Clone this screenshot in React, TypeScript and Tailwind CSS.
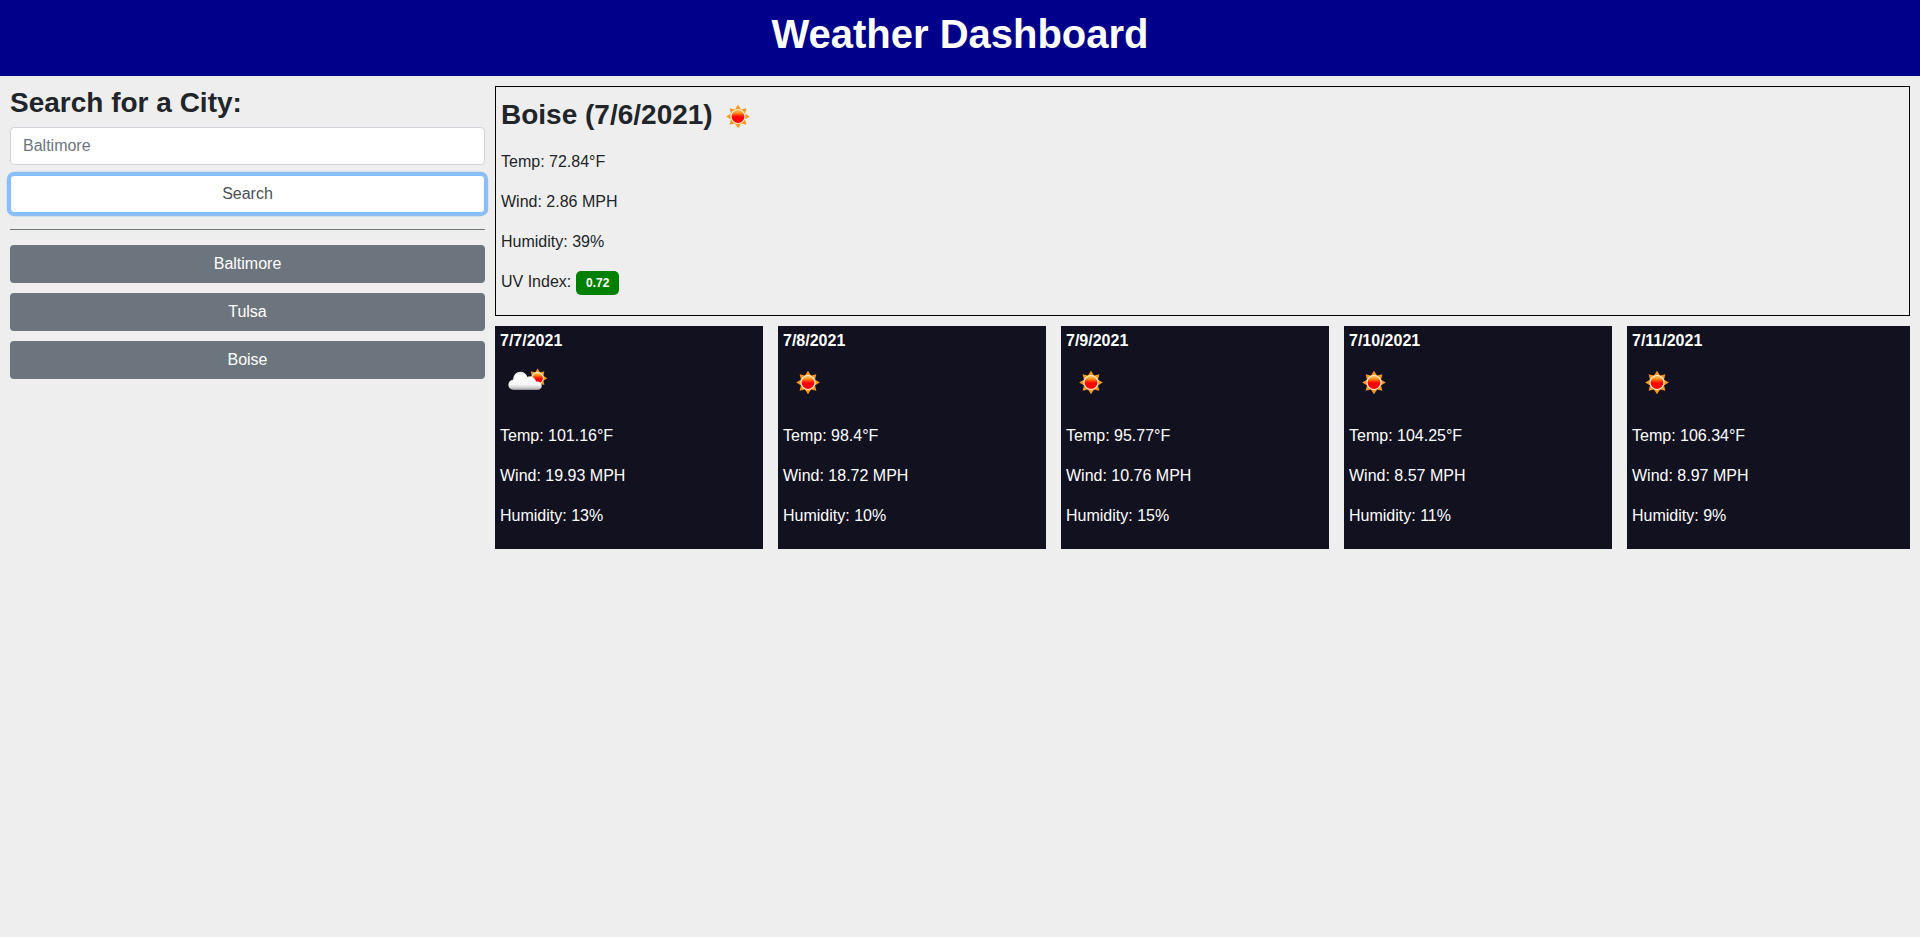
function SunShape({ cx, cy, scale = 1 }: { cx: number; cy: number; scale?: number }) {
  const angles = [0, 45, 90, 135, 180, 225, 270, 315];
  return (
    <g transform={`translate(${cx} ${cy}) scale(${scale})`}>
      {angles.map((a) => (
        <path key={a} d="M-3.3 -6.4 L0 -11.8 L3.3 -6.4 Z" fill="#fb961a" transform={`rotate(${a})`} />
      ))}
      <circle r="7.6" fill="#fff0e0" />
      <circle r="6.4" fill="url(#sunFill)" />
    </g>
  );
}

function Defs() {
  return (
    <defs>
      <linearGradient id="sunFill" x1="0" y1="0" x2="0" y2="1">
        <stop offset="0" stopColor="#ffc050" />
        <stop offset="0.2" stopColor="#ff9a24" />
        <stop offset="0.4" stopColor="#ff3a00" />
        <stop offset="0.55" stopColor="#ff0000" />
        <stop offset="1" stopColor="#ff0800" />
      </linearGradient>
      <linearGradient id="cloudFill" x1="0" y1="0" x2="0" y2="1">
        <stop offset="0" stopColor="#e4e4e4" />
        <stop offset="0.25" stopColor="#ffffff" />
        <stop offset="0.7" stopColor="#f6f6f6" />
        <stop offset="0.9" stopColor="#c8c8c8" />
        <stop offset="1" stopColor="#8a8a8a" />
      </linearGradient>
    </defs>
  );
}

function WeatherIcon({ kind, className = "" }: { kind: "sun" | "cloud"; className?: string }) {
  return (
    <svg width="50" height="50" viewBox="0 0 50 50" className={`block shrink-0 ${className}`}>
      <Defs />
      {kind === "sun" ? (
        <SunShape cx={25} cy={24.5} />
      ) : (
        <>
          <SunShape cx={37.6} cy={20.2} scale={0.82} />
          <path
            d="M14 32 C10.6 32 8.4 29.8 8.4 26.8 C8.4 23.9 10.4 21.9 13.2 21.4 C13.4 16.8 16.4 13.8 20.4 13.8 C23.8 13.8 26.4 15.8 27.3 18.9 C31 17.8 35.2 19.6 36 23.6 C39.4 23.4 41.8 25 41.8 27.8 C41.8 30.3 40 32 37.2 32 Z"
            fill="url(#cloudFill)"
          />
        </>
      )}
    </svg>
  );
}

const cities = ["Baltimore", "Tulsa", "Boise"];

const forecast: { date: string; icon: "sun" | "cloud"; temp: string; wind: string; humidity: string }[] = [
  { date: "7/7/2021", icon: "cloud", temp: "101.16", wind: "19.93", humidity: "13" },
  { date: "7/8/2021", icon: "sun", temp: "98.4", wind: "18.72", humidity: "10" },
  { date: "7/9/2021", icon: "sun", temp: "95.77", wind: "10.76", humidity: "15" },
  { date: "7/10/2021", icon: "sun", temp: "104.25", wind: "8.57", humidity: "11" },
  { date: "7/11/2021", icon: "sun", temp: "106.34", wind: "8.97", humidity: "9" },
];

export default function App() {
  return (
    <div className="min-h-screen bg-[#eeeeee] font-['Liberation_Sans',Arial,sans-serif] text-base leading-6 text-[#212529]">
      <header className="h-[76px] bg-[#00008b] pt-2.5 text-center">
        <h1 className="text-[40px] leading-[48px] font-bold text-white">Weather Dashboard</h1>
      </header>
      <div className="flex">
        <aside className="w-[495px] shrink-0 p-2.5">
          <h2 className="mb-2 text-[28px] leading-[33px] font-bold">Search for a City:</h2>
          <input
            type="text"
            placeholder="Baltimore"
            className="block h-[38px] w-full rounded border border-[#ced4da] bg-white px-3 pt-[5px] pb-1.5 placeholder:text-[#6c757d]"
          />
          <button className="mt-2.5 block h-[38px] w-full rounded border border-[#80bdff] bg-white text-[#495057] shadow-[0_0_0_3.2px_rgba(0,123,255,0.42)]">
            Search
          </button>
          <hr className="mt-4 mb-[15px] border-t border-[#6f7a70]" />
          <div className="flex flex-col gap-2.5">
            {cities.map((city) => (
              <button key={city} className="h-[38px] rounded bg-[#6c757d] text-white">
                {city}
              </button>
            ))}
          </div>
        </aside>
        <main className="min-w-0 flex-1 py-2.5 pr-2.5">
          <section className="h-[230px] border border-black p-[5px]">
            <h2 className="flex h-[50px] items-center text-[28px] leading-[33.6px] font-bold">
              <span className="pb-1">Boise (7/6/2021)</span>
              <WeatherIcon kind="sun" />
            </h2>
            <div className="mt-2 flex flex-col gap-4">
              <p>Temp: 72.84°F</p>
              <p>Wind: 2.86 MPH</p>
              <p>Humidity: 39%</p>
              <p className="flex">
                <span>UV Index:</span>
                <span className="mt-[1px] ml-[5px] h-6 w-[43px] rounded-[5px] bg-[#008000] text-center text-xs leading-6 font-bold text-white">
                  0.72
                </span>
              </p>
            </div>
          </section>
          <section className="mt-2.5 grid grid-cols-5">
            {forecast.map((day) => (
              <article
                key={day.date}
                className="mr-[15px] h-[223px] bg-[#111120] p-[5px] text-white last:mr-0"
              >
                <h3 className="mb-2 leading-[19px] font-bold">{day.date}</h3>
                <WeatherIcon kind={day.icon} />
                <div className="mt-4 flex flex-col gap-4">
                  <p>Temp: {day.temp}°F</p>
                  <p>Wind: {day.wind} MPH</p>
                  <p>Humidity: {day.humidity}%</p>
                </div>
              </article>
            ))}
          </section>
        </main>
      </div>
    </div>
  );
}
